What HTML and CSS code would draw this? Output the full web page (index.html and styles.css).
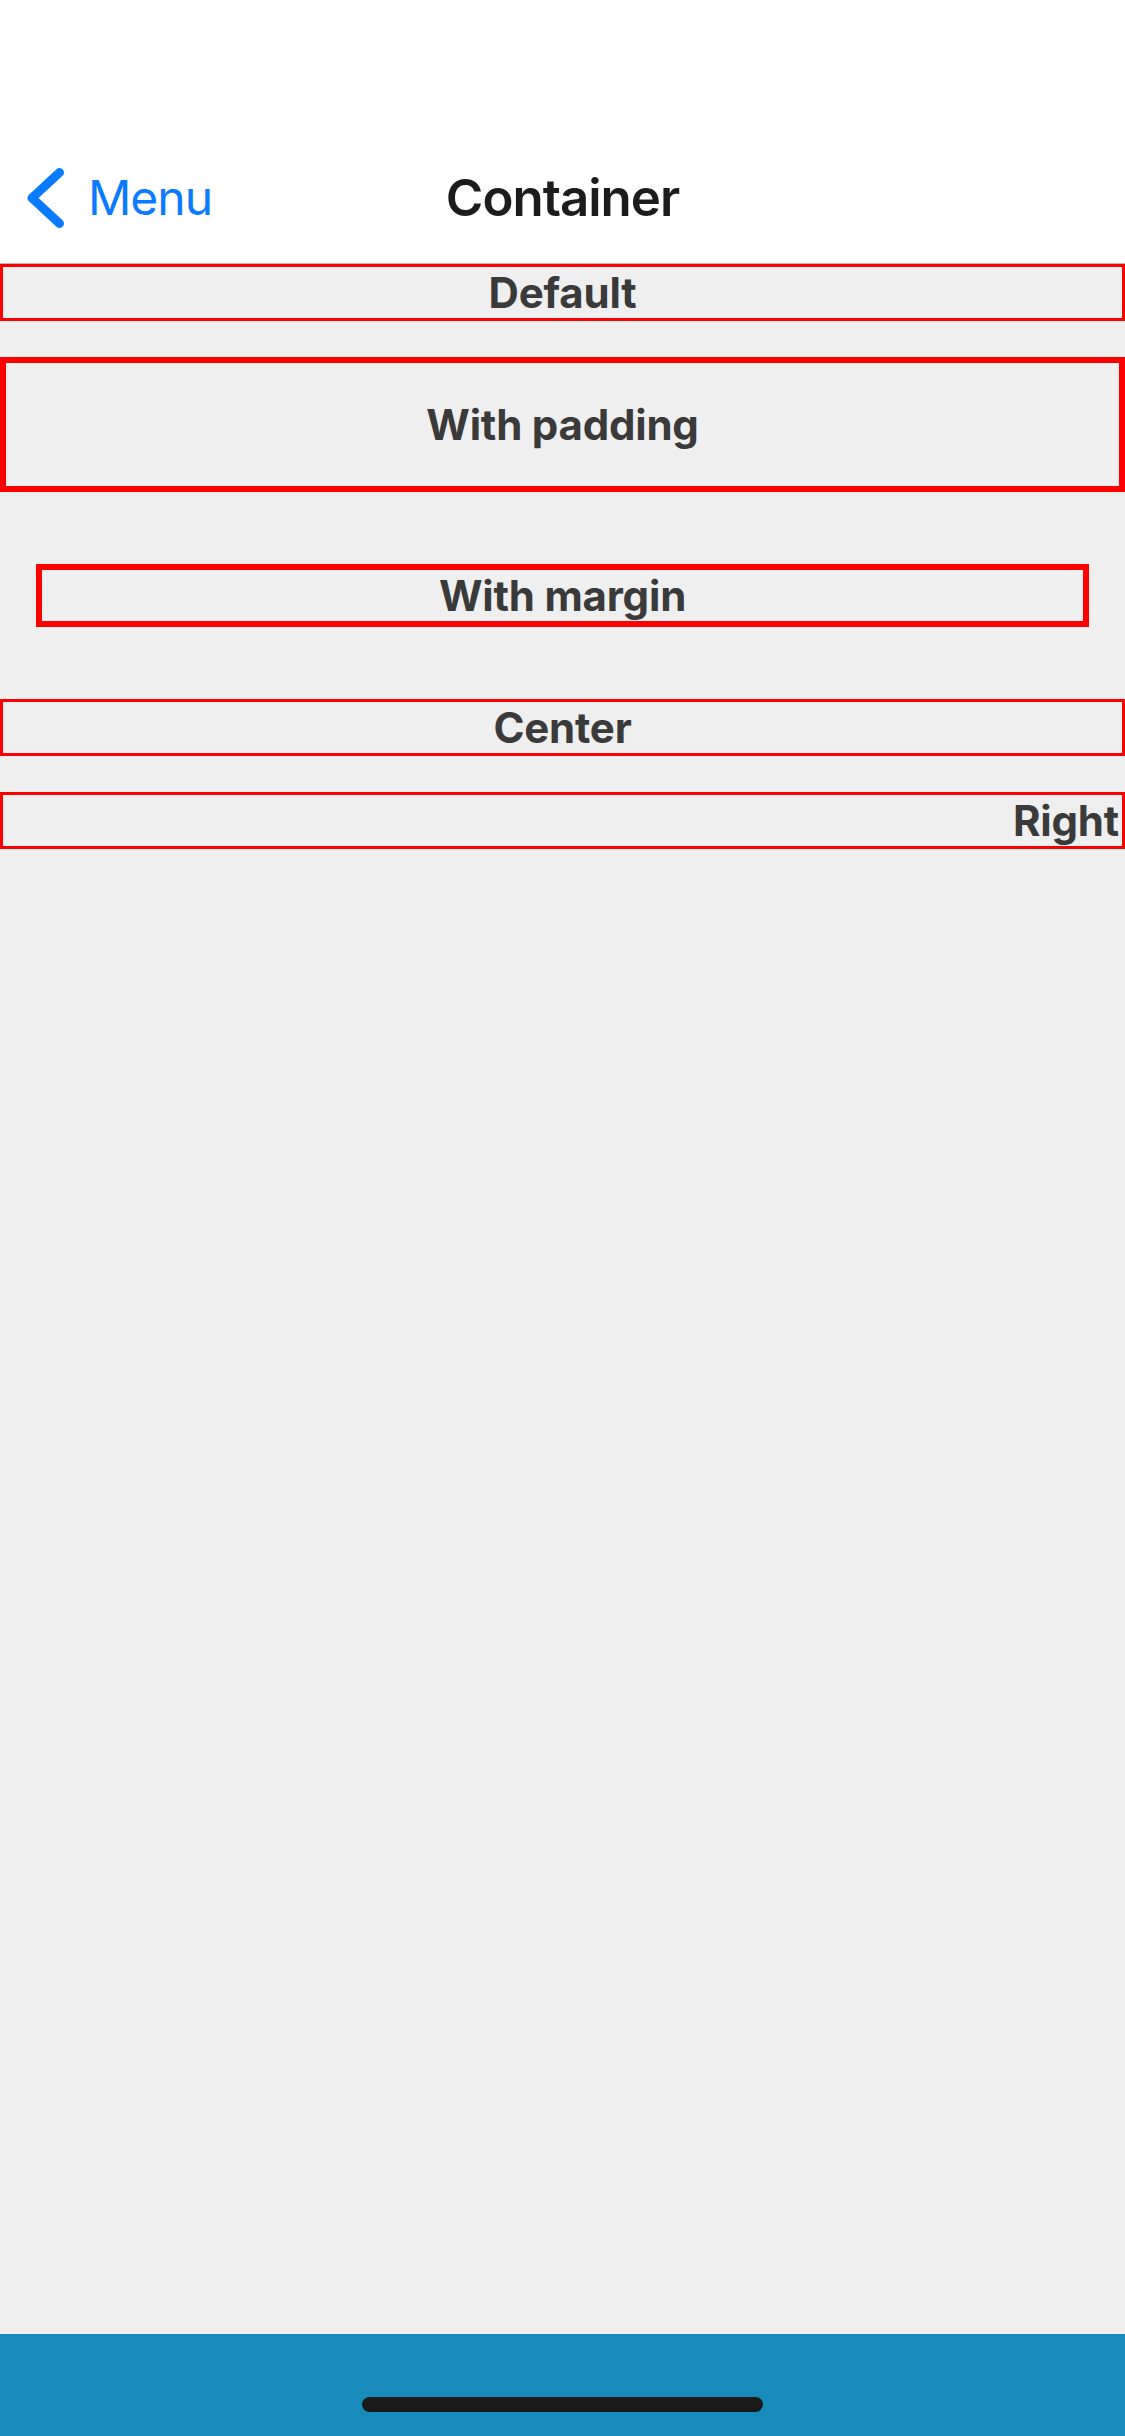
FILE: index.html
```html
<!DOCTYPE html>
<html>
<head>
<meta charset="utf-8">
<link rel="stylesheet" href="styles.css">
</head>
<body>
<div class="screen">
  <header class="header">
    <div class="statusbar"></div>
    <nav class="nav">
      <div class="back">
        <svg class="chev" width="40" height="70" viewBox="0 0 40 70">
          <polyline points="32.5,9.5 5,35 32.5,60.5" fill="none" stroke="#0a7aff" stroke-width="9" stroke-linecap="round" stroke-linejoin="round"/>
        </svg>
        <span class="back-label">Menu</span>
      </div>
      <div class="title">Container</div>
      <div class="spacer"></div>
    </nav>
  </header>
  <main class="content">
    <div class="box">Default</div>
    <div class="box padded">With padding</div>
    <div class="box margined">With margin</div>
    <div class="box center">Center</div>
    <div class="box right">Right</div>
  </main>
  <footer class="bottombar">
    <div class="home-indicator"></div>
  </footer>
</div>
</body>
</html>
```
FILE: styles.css
```css
html, body {
  margin: 0;
  padding: 0;
}
body {
  width: 1125px;
  height: 2436px;
  background: #efefef;
  font-family: Inter, "Liberation Sans", sans-serif;
  overflow: hidden;
}
.screen {
  display: flex;
  flex-direction: column;
  height: 2436px;
}
.header {
  background: #ffffff;
  border-bottom: 1px solid #b9b9b9;
  flex: 0 0 auto;
}
.statusbar {
  height: 132px;
}
.nav {
  height: 131px;
  display: grid;
  grid-template-columns: 1fr auto 1fr;
  align-items: center;
}
.back {
  display: flex;
  align-items: center;
  padding-left: 27px;
}
.chev {
  display: block;
  margin-right: 21px;
}
.back-label {
  color: #0a7aff;
  font-size: 48px;
  font-weight: 400;
  letter-spacing: -1px;
}
.title {
  color: #1c1c1c;
  font-size: 51px;
  font-weight: 600;
  letter-spacing: -1px;
}
.content {
  flex: 1 1 auto;
  display: flex;
  flex-direction: column;
  gap: 36px;
}
.box {
  border: 3px solid #ff0000;
  line-height: 51px;
  font-size: 42px;
  font-weight: 700;
  color: #3a3a3a;
  text-align: center;
  letter-spacing: -0.2px;
}
.padded {
  border-width: 6px;
  padding: 36px;
}
.margined {
  border-width: 6px;
  margin: 36px;
}
.center {
  text-align: center;
}
.right {
  text-align: right;
  padding-right: 3px;
}
.bottombar {
  flex: 0 0 102px;
  background: #178cbb;
  display: flex;
  justify-content: center;
  align-items: flex-end;
  padding-bottom: 24px;
  box-sizing: border-box;
}
.home-indicator {
  width: 401px;
  height: 15px;
  border-radius: 8px;
  background: #1a1a1a;
}
```
